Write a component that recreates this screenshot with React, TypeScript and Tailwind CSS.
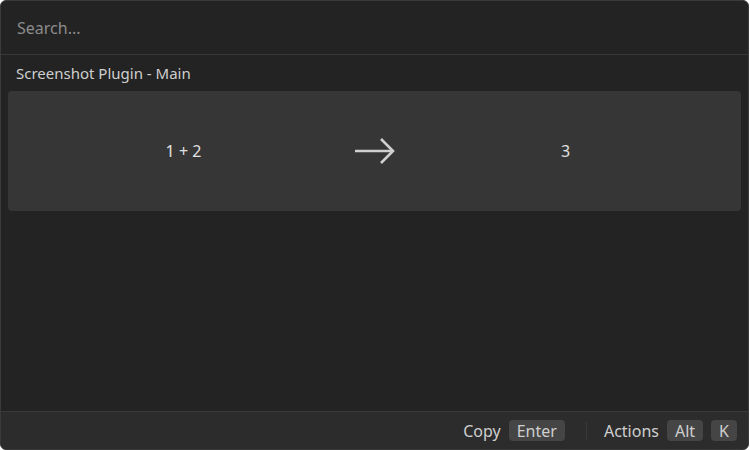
import React from "react";

export default function App() {
  return (
    <div
      className="w-[750px] h-[450px] bg-white"
      style={{ fontFamily: '"Noto Sans", "Open Sans", sans-serif' }}
    >
      <div className="w-[749px] h-[450px] bg-[#232323] border border-[#3a3a3a] rounded-[6px] flex flex-col overflow-hidden">
        <div className="h-[54px] flex items-center px-[16px] border-b border-[#383838] shrink-0">
          <span className="text-[16px] text-[#8c8c8c]">Search...</span>
        </div>
        <div className="h-[36px] flex items-center px-[15px] shrink-0">
          <span className="text-[15px] text-[#cfcfcf]">Screenshot Plugin - Main</span>
        </div>
        <div className="mx-[7px] h-[120px] bg-[#363636] rounded-[4px] grid grid-cols-3 items-center px-[80px] shrink-0">
          <div className="text-center text-[16px] text-[#e0e0e0]">1 + 2</div>
          <div className="flex justify-center">
            <svg width="42" height="28" viewBox="0 0 42 28" fill="none" stroke="#d0d0d0" strokeWidth="2.6" strokeLinecap="butt" strokeLinejoin="miter">
              <path d="M1 14 H39" />
              <path d="M27 2 L39 14 L27 26" />
            </svg>
          </div>
          <div className="text-center text-[16px] text-[#e0e0e0]">3</div>
        </div>
        <div className="flex-1" />
        <div className="h-[38px] bg-[#2c2c2c] border-t border-[#3a3a3a] flex items-center justify-end pr-[11px] shrink-0 text-[16px] text-[#cfcfcf]">
          <span>Copy</span>
          <span className="ml-[8px] bg-[#454545] rounded-[4px] px-[8px] h-[21px] flex items-center">Enter</span>
          <span className="ml-[21px] w-px h-[18px] bg-[#3a3a3a]" />
          <span className="ml-[17px]">Actions</span>
          <span className="ml-[8px] bg-[#454545] rounded-[4px] px-[8px] h-[21px] flex items-center">Alt</span>
          <span className="ml-[8px] bg-[#454545] rounded-[4px] px-[8px] h-[21px] flex items-center">K</span>
        </div>
      </div>
    </div>
  );
}
